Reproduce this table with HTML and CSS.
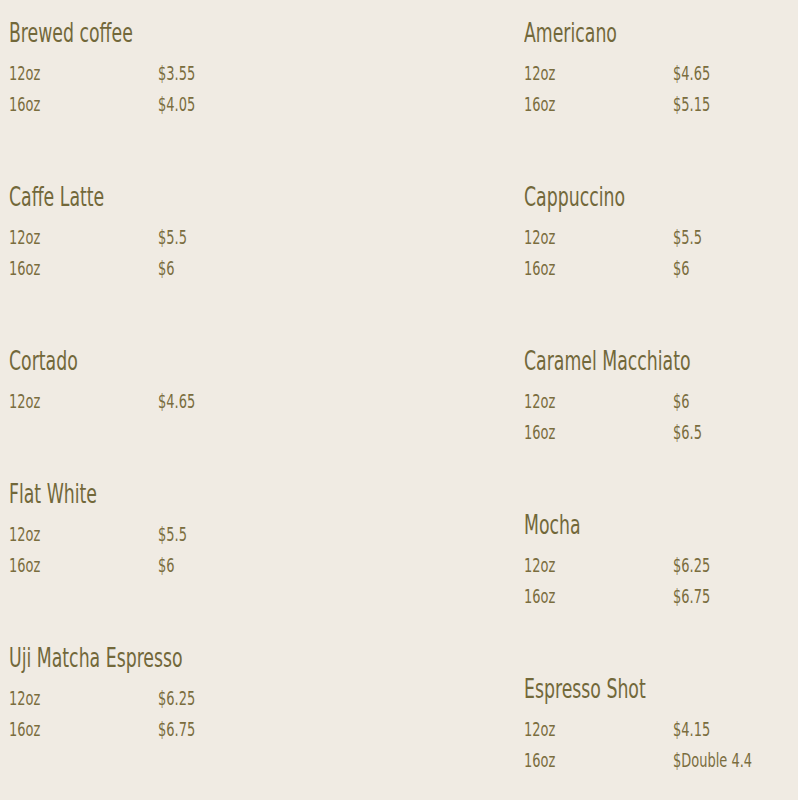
FILE: index.html
```html
<!DOCTYPE html>
<html>
<head>
<meta charset="utf-8">
<link rel="stylesheet" href="styles.css">
</head>
<body>
<div class="menu">
  <div class="col">
    <section class="item">
      <h2 class="name">Brewed coffee</h2>
      <div class="row"><span class="size">12oz</span><span class="price">$3.55</span></div>
      <div class="row"><span class="size">16oz</span><span class="price">$4.05</span></div>
    </section>
    <section class="item">
      <h2 class="name">Caffe Latte</h2>
      <div class="row"><span class="size">12oz</span><span class="price">$5.5</span></div>
      <div class="row"><span class="size">16oz</span><span class="price">$6</span></div>
    </section>
    <section class="item">
      <h2 class="name">Cortado</h2>
      <div class="row"><span class="size">12oz</span><span class="price">$4.65</span></div>
    </section>
    <section class="item">
      <h2 class="name">Flat White</h2>
      <div class="row"><span class="size">12oz</span><span class="price">$5.5</span></div>
      <div class="row"><span class="size">16oz</span><span class="price">$6</span></div>
    </section>
    <section class="item">
      <h2 class="name">Uji Matcha Espresso</h2>
      <div class="row"><span class="size">12oz</span><span class="price">$6.25</span></div>
      <div class="row"><span class="size">16oz</span><span class="price">$6.75</span></div>
    </section>
  </div>
  <div class="col">
    <section class="item">
      <h2 class="name">Americano</h2>
      <div class="row"><span class="size">12oz</span><span class="price">$4.65</span></div>
      <div class="row"><span class="size">16oz</span><span class="price">$5.15</span></div>
    </section>
    <section class="item">
      <h2 class="name">Cappuccino</h2>
      <div class="row"><span class="size">12oz</span><span class="price">$5.5</span></div>
      <div class="row"><span class="size">16oz</span><span class="price">$6</span></div>
    </section>
    <section class="item">
      <h2 class="name">Caramel Macchiato</h2>
      <div class="row"><span class="size">12oz</span><span class="price">$6</span></div>
      <div class="row"><span class="size">16oz</span><span class="price">$6.5</span></div>
    </section>
    <section class="item">
      <h2 class="name">Mocha</h2>
      <div class="row"><span class="size">12oz</span><span class="price">$6.25</span></div>
      <div class="row"><span class="size">16oz</span><span class="price">$6.75</span></div>
    </section>
    <section class="item">
      <h2 class="name">Espresso Shot</h2>
      <div class="row"><span class="size">12oz</span><span class="price">$4.15</span></div>
      <div class="row"><span class="size">16oz</span><span class="price">$Double 4.4</span></div>
    </section>
  </div>
</div>
</body>
</html>
```
FILE: styles.css
```css
html, body {
  margin: 0;
  padding: 0;
  background: #f0ebe3;
}
body {
  font-family: "DejaVu Sans Condensed", "Liberation Sans Narrow", "Liberation Sans", sans-serif;
  font-stretch: condensed;
  color: #7a6d3e;
  overflow: hidden;
}
.menu {
  display: grid;
  grid-template-columns: 515px 283px;
  padding: 15px 0 0 9px;
}
.col {
  display: flex;
  flex-direction: column;
}
.item {
  margin-bottom: 59px;
}
.name {
  margin: 0 0 7px 0;
  font-size: 26px;
  font-weight: 400;
  line-height: 36px;
  color: #72683a;
  transform: scaleX(0.74);
  transform-origin: left center;
  white-space: nowrap;
}
.row {
  display: grid;
  grid-template-columns: 149px auto;
  font-size: 19px;
  line-height: 31px;
}
.size,
.price {
  display: inline-block;
  transform: scaleX(0.76);
  transform-origin: left center;
  white-space: nowrap;
}
```
